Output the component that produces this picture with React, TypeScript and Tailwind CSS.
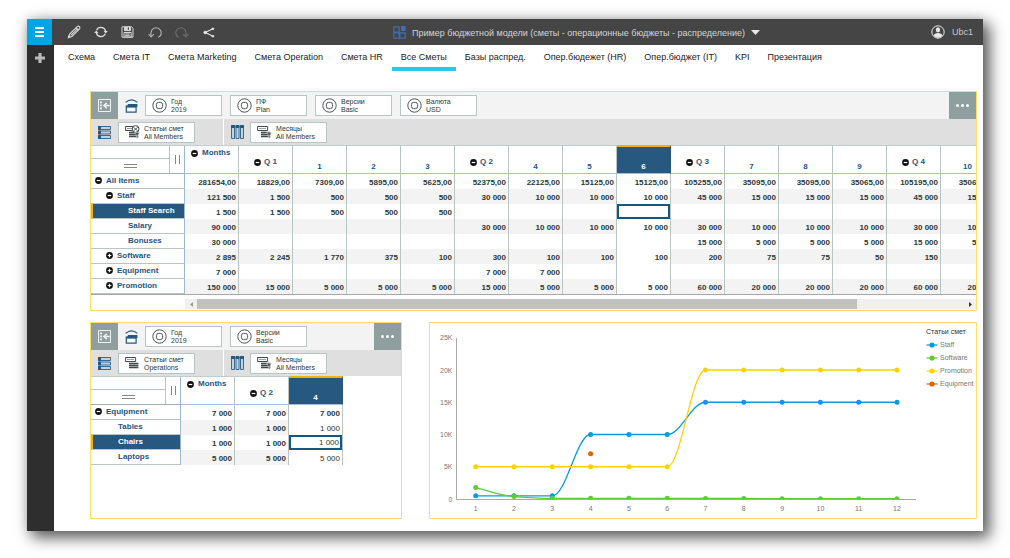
import React from "react";

type IconProps = { className?: string };

const tabs = [
  "Схема", "Смета IT", "Смета Marketing", "Смета Operation", "Смета HR", "Все Сметы",
  "Базы распред.", "Опер.бюдежет (HR)", "Опер.бюджет (IT)", "KPI", "Презентация",
];

function PencilIcon() {
  return (
    <svg width="14" height="14" viewBox="0 0 14 14" fill="none" stroke="#dcdcdc" strokeWidth="1.1">
      <path d="M1.4 12.6 2.6 9 10.2 1.6Q11.5.6 12.4 1.6T12.5 3.8L4.9 11.4Z" />
      <path d="M9 2.6l2.4 2.4M3.8 10.3 10.4 3.8" />
      <path d="m.8 13.2 1-3 1.9 2Z" fill="#dcdcdc" stroke="none" />
    </svg>
  );
}

function RefreshIcon() {
  return (
    <svg width="14" height="14" viewBox="0 0 14 14" fill="none" stroke="#e0e0e0" strokeWidth="1.2">
      <path d="M2.6 5.2A4.8 4.8 0 0 1 11.6 6M11.4 8.8A4.8 4.8 0 0 1 2.4 8" />
      <path d="M9.6 6h4.2l-2.1 2.6ZM.2 8h4.2L2.3 5.4Z" fill="#e0e0e0" stroke="none" />
    </svg>
  );
}

function SaveIcon() {
  return (
    <svg width="13" height="12" viewBox="0 0 13 12" fill="none" stroke="#d8d8d8" strokeWidth="1">
      <path d="M1 .8h9.6L12 2.2v9H1Z" />
      <path d="M3.5 1h6v3.6h-6Z" fill="#d8d8d8" />
      <path d="M7.4 1.6v2.2" stroke="#454545" strokeWidth="1.2" />
      <path d="M3 6.5h7.2v4.6H3ZM4.2 8h4.6M4.2 9.6h4.6" />
    </svg>
  );
}

function UndoIcon({ className }: IconProps) {
  return (
    <svg className={className} width="14" height="13" viewBox="0 0 14 13" fill="none" stroke="currentColor" strokeWidth="1.1">
      <path d="M3 10.6C2.2 5 4.5 1.7 7.8 1.7S13.3 4.2 13.2 7 11.8 10.8 10.4 11.2" />
      <path d="M.6 8.2 3.1 11 5.8 8.2" />
    </svg>
  );
}

function ShareIcon() {
  return (
    <svg width="12" height="11" viewBox="0 0 12 11" fill="#e4e4e4" stroke="#e4e4e4">
      <path d="M10 1.8 2.2 5.5 10 9.2" fill="none" strokeWidth="1.1" />
      <circle cx="2.2" cy="5.5" r="1.3" />
      <circle cx="9.9" cy="1.8" r=".9" />
      <circle cx="9.9" cy="9.2" r=".9" />
    </svg>
  );
}

function BoardIcon() {
  return (
    <svg width="13" height="13" viewBox="0 0 13 13" fill="none" stroke="#3a6fb5" strokeWidth="1.2">
      <path d="M.8.8h5.4v5.4H.8ZM.8 6.8h5.4v5.4H.8ZM6.8 6.8h5.4v5.4H6.8Z" />
      <rect x="8" y="0" width="4.6" height="5" fill="#3a6fb5" stroke="none" />
    </svg>
  );
}

function UserIcon() {
  return (
    <svg width="14" height="14" viewBox="0 0 14 14">
      <circle cx="7" cy="7" r="6.2" fill="none" stroke="#e8e8e8" />
      <ellipse cx="7" cy="4.8" rx="2.2" ry="2.6" fill="#e8e8e8" />
      <path d="M2.5 10.6Q3.4 7.9 7 7.9t4.5 2.7Q9.8 12.8 7 12.8T2.5 10.6Z" fill="#e8e8e8" />
    </svg>
  );
}

function CollapseIcon() {
  return (
    <svg width="13" height="13" viewBox="0 0 13 13" fill="none" stroke="#eef2f2">
      <path d="M.5.5h12v12H.5Z" strokeWidth="1" />
      <path d="M2 3.4h2M2 6.4h2M2 9.4h2" strokeWidth="1.8" />
      <path d="M5.6 6.5h6" strokeWidth="1.6" />
      <path d="M8.8 3.9 6 6.5l2.8 2.6" strokeWidth="1.5" />
    </svg>
  );
}

function ContextIcon() {
  return (
    <svg width="13" height="14" viewBox="0 0 13 14" fill="none" stroke="#24587f">
      <path d="M.6 3.4Q6.5-1.6 12.4 3.4" strokeWidth="1.2" />
      <path d="M2.8 5h9.6v3H2.8Z" fill="#24587f" stroke="none" />
      <path d="M1.3 7h9.8v6.2H1.3Z" strokeWidth="1.2" fill="#f7f7f7" />
      <path d="M1.3 7.6h9.8" strokeWidth="2" />
    </svg>
  );
}

function RowsIcon() {
  return (
    <svg width="13" height="13" viewBox="0 0 13 13" fill="#c3d2df" stroke="#3a6a90" strokeWidth="1">
      <path d="M.5.5h12v3H.5ZM.5 5h12v3H.5ZM.5 9.5h12v3H.5Z" />
      <path d="M.5.5h2v3H.5ZM.5 5h2v3H.5ZM.5 9.5h2v3H.5Z" fill="#24587f" stroke="#24587f" />
    </svg>
  );
}

function ColumnsIcon() {
  return (
    <svg width="13" height="14" viewBox="0 0 13 14" fill="#c3d2df" stroke="#3a6a90" strokeWidth="1">
      <path d="M.5.5h3v13H.5ZM5 .5h3v13H5ZM9.5.5h3v13H9.5Z" />
      <path d="M.5.5h3v2H.5ZM5 .5h3v2H5ZM9.5.5h3v2H9.5Z" fill="#24587f" stroke="#24587f" />
    </svg>
  );
}

function MemberIcon() {
  return (
    <svg width="15" height="15" viewBox="0 0 15 15" fill="none" stroke="#4c5656" strokeWidth="1">
      <circle cx="7.5" cy="7.5" r="6.7" />
      <rect x="4.4" y="4.4" width="6.2" height="6.2" rx="2.2" />
    </svg>
  );
}

type FilterKind = "clock" | "funnel" | "plain";

function FilterIcon({ kind }: { kind: FilterKind }) {
  return (
    <svg width="15" height="14" viewBox="0 0 15 14" fill="none" stroke="#3f4a4a" strokeWidth="1">
      <path d="M.6 1.5h10v4H.6Z" />
      <path d="M2 3.5h7" stroke="#9aa5a5" />
      <path d="M4 7.5h9.4M4 9.5h9.4M4 11.5h9.4" strokeWidth="1.3" />
      {kind === "clock" && (
        <>
          <circle cx="10.6" cy="4" r="3.4" fill="#fff" />
          <path d="M8.4 2.2 12.8 6M12.8 2.2 8.4 6" strokeWidth=".9" />
        </>
      )}
      {kind !== "plain" && <path d="M9.6 7.6h5l-1.8 2.4v3.6l-1.4-1V10Z" fill="#3f4a4a" stroke="#fff" strokeWidth=".5" />}
    </svg>
  );
}

function Toggle({ open }: { open: boolean }) {
  return (
    <button type="button" aria-label={open ? "Collapse" : "Expand"} className="block shrink-0">
      <svg width="7" height="7" viewBox="0 0 7 7">
        <circle cx="3.5" cy="3.5" r="3.4" fill="#111" />
        <path d={open ? "M1.7 3.5h3.6" : "M1.7 3.5h3.6M3.5 1.7v3.6"} stroke="#fff" strokeWidth="1.2" />
      </svg>
    </button>
  );
}

function Chip({ icon, name, value }: { icon: React.ReactNode; name: string; value: string }) {
  return (
    <button type="button" className="flex h-[21px] w-[77px] shrink-0 items-center gap-1 border border-[#b9c4c4] bg-white pl-[5px] text-left text-[7px] leading-[8px] text-[#2c3838]">
      <span className="flex w-4 shrink-0 justify-center">{icon}</span>
      <span className="whitespace-nowrap pt-px">
        <span className="block">{name}</span>
        <span className="block">{value}</span>
      </span>
    </button>
  );
}

type Member = { name: string; value: string };

function PanelBars({ context, rowKind, rowValue }: { context: Member[]; rowKind: FilterKind; rowValue: string }) {
  return (
    <>
      <div className="flex h-[27px] items-center bg-[#f3f3f3]">
        <button type="button" aria-label="Hide panel" className="flex h-full w-[27px] shrink-0 items-center justify-center bg-[#8f9e9e]">
          <CollapseIcon />
        </button>
        <span className="flex w-[27px] shrink-0 justify-center"><ContextIcon /></span>
        <div className="flex gap-2">
          {context.map((m) => (
            <Chip key={m.name} icon={<MemberIcon />} name={m.name} value={m.value} />
          ))}
        </div>
        <button type="button" aria-label="More" className="ml-auto flex h-full w-[27px] shrink-0 items-center justify-center gap-[2px] bg-[#8f9e9e]">
          <span className="size-[3px] rounded-full bg-white" />
          <span className="size-[3px] rounded-full bg-white" />
          <span className="size-[3px] rounded-full bg-white" />
        </button>
      </div>
      <div className="flex h-[26px] bg-[#dfdfdf]">
        <div className="flex w-[133px] shrink-0 items-center border-r border-white">
          <span className="flex w-[27px] justify-center"><RowsIcon /></span>
          <Chip icon={<FilterIcon kind={rowKind} />} name="Статьи смет" value={rowValue} />
        </div>
        <div className="flex items-center">
          <span className="flex w-[26px] justify-center"><ColumnsIcon /></span>
          <Chip icon={<FilterIcon kind="funnel" />} name="Месяцы" value="All Members" />
        </div>
      </div>
    </>
  );
}

type Column = { label: string; kind: "all" | "quarter" | "month"; selected?: boolean };
type Row = { label: string; level: number; toggle?: "open" | "closed"; selected?: boolean; values: string[] };

const month = (label: string, selected = false): Column => ({ label, kind: "month", selected });
const quarter = (label: string): Column => ({ label, kind: "quarter" });
const allMonths: Column = { label: "Months", kind: "all" };

function headerTone(c: Column) {
  return c.selected
    ? "border-t-2 border-t-[#f2b010] border-r-[#265880] bg-[#265880] text-white"
    : "border-t border-t-[#c3cdcd] border-r-[#b9c4c4] bg-white text-[#1f5582]";
}

function HeaderLabel({ column }: { column: Column }) {
  if (column.kind === "all") {
    return <div className="flex h-[27px] items-start gap-1 pl-[6px] pt-[2px]"><span className="pt-[2px]"><Toggle open /></span>{column.label}</div>;
  }
  if (column.kind === "quarter") {
    return <div className="flex h-[27px] items-center justify-center gap-[3px] pt-1"><span className="pt-px"><Toggle open /></span>{column.label}</div>;
  }
  return <div className="flex h-[26px] items-end justify-center pb-px">{column.label}</div>;
}

const indents = ["pl-[4px]", "pl-[15px]", "pl-[37px]", "pl-[27px]"];

function Grid({ columns, rows, caption, compact = false }: { columns: Column[]; rows: Row[]; caption: string; compact?: boolean }) {
  return (
    <div className="overflow-hidden">
      <table className="w-0 table-fixed border-separate border-spacing-0 text-[8px] leading-[10px]" aria-label={caption}>
        <colgroup>
          <col className={compact ? "w-[90px]" : "w-[94px]"} />
          {columns.map((c) => <col key={c.label} className="w-[54px]" />)}
        </colgroup>
        <thead>
          <tr className="h-[29px]">
            <th className="border-b border-r border-t border-b-[#9fb0b8] border-r-[#9db7d0] border-t-[#c3cdcd] p-0">
              <div className="flex h-[27px]">
                <div className="flex flex-1 flex-col">
                  <div className="h-[13px] border-b border-[#b9c4c4]" />
                  <div className="flex flex-1 flex-col items-center justify-center gap-[2px]">
                    <span className="h-px w-[13px] bg-[#808a8a]" />
                    <span className="h-px w-[13px] bg-[#808a8a]" />
                  </div>
                </div>
                <div className="flex w-[15px] items-center justify-center gap-[3px] border-l border-[#b9c4c4]">
                  <span className="h-[9px] w-px bg-[#808a8a]" />
                  <span className="h-[9px] w-px bg-[#808a8a]" />
                </div>
              </div>
            </th>
            {columns.map((c) => (
              <th key={c.label} scope="col" className={`border-b border-r border-b-[#a9bedb] p-0 ${headerTone(c)}`}>
                <HeaderLabel column={c} />
              </th>
            ))}
          </tr>
        </thead>
        <tbody>
          {rows.map((r, i) => (
            <tr key={r.label} className="h-[15px]">
              <th
                scope="row"
                className={`border-b border-r border-b-[#b9c4c4] border-r-[#9db7d0] p-0 text-left ${
                  r.selected ? "bg-[#265880] text-white shadow-[inset_2px_0_0_#f2b010]" : "text-[#1f5582]"
                }`}
              >
                <div className={`flex h-[14px] items-center gap-1 pb-px ${indents[r.level]}`}>
                  {r.toggle && <Toggle open={r.toggle === "open"} />}
                  {r.label}
                </div>
              </th>
              {columns.map((c, j) => {
                const active = r.selected && c.selected;
                const stripe = i % 2 === 1 && !c.selected ? "bg-[#f3f3f3]" : "bg-white";
                const weight = compact && c.selected && i > 0 ? "font-normal" : "font-bold";
                return (
                  <td key={c.label} className={`border-r border-r-[#b9c4c4] p-0 text-right text-[#2c3838] ${stripe} ${weight}`}>
                    {active ? (
                      <input
                        aria-label={`${r.label}, ${c.label}`}
                        defaultValue={r.values[j]}
                        className="block h-[15px] w-full border-2 border-[#0f5a85] bg-white pr-px text-right"
                      />
                    ) : (
                      <div className="h-[15px] overflow-hidden whitespace-nowrap pr-[2px] pt-[4px]">{r.values[j]}</div>
                    )}
                  </td>
                );
              })}
            </tr>
          ))}
        </tbody>
      </table>
    </div>
  );
}

const mainColumns: Column[] = [
  allMonths, quarter("Q 1"), month("1"), month("2"), month("3"),
  quarter("Q 2"), month("4"), month("5"), month("6", true),
  quarter("Q 3"), month("7"), month("8"), month("9"),
  quarter("Q 4"), month("10"),
];

const mainRows: Row[] = [
  { label: "All Items", level: 0, toggle: "open", values: ["281654,00", "18829,00", "7309,00", "5895,00", "5625,00", "52375,00", "22125,00", "15125,00", "15125,00", "105255,00", "35095,00", "35095,00", "35065,00", "105195,00", "35065,00"] },
  { label: "Staff", level: 1, toggle: "open", values: ["121 500", "1 500", "500", "500", "500", "30 000", "10 000", "10 000", "10 000", "45 000", "15 000", "15 000", "15 000", "45 000", "15 000"] },
  { label: "Staff Search", level: 2, selected: true, values: ["1 500", "1 500", "500", "500", "500", "", "", "", "", "", "", "", "", "", ""] },
  { label: "Salary", level: 2, values: ["90 000", "", "", "", "", "30 000", "10 000", "10 000", "10 000", "30 000", "10 000", "10 000", "10 000", "30 000", "10 000"] },
  { label: "Bonuses", level: 2, values: ["30 000", "", "", "", "", "", "", "", "", "15 000", "5 000", "5 000", "5 000", "15 000", "5 000"] },
  { label: "Software", level: 1, toggle: "closed", values: ["2 895", "2 245", "1 770", "375", "100", "300", "100", "100", "100", "200", "75", "75", "50", "150", ""] },
  { label: "Equipment", level: 1, toggle: "closed", values: ["7 000", "", "", "", "", "7 000", "7 000", "", "", "", "", "", "", "", ""] },
  { label: "Promotion", level: 1, toggle: "closed", values: ["150 000", "15 000", "5 000", "5 000", "5 000", "15 000", "5 000", "5 000", "5 000", "60 000", "20 000", "20 000", "20 000", "60 000", "20 000"] },
];

const detailColumns: Column[] = [allMonths, quarter("Q 2"), month("4", true)];

const detailRows: Row[] = [
  { label: "Equipment", level: 0, toggle: "open", values: ["7 000", "7 000", "7 000"] },
  { label: "Tables", level: 3, values: ["1 000", "1 000", "1 000"] },
  { label: "Chairs", level: 3, selected: true, values: ["1 000", "1 000", "1 000"] },
  { label: "Laptops", level: 3, values: ["5 000", "5 000", "5 000"] },
];

const series = [
  { name: "Staff", color: "#0a9bdc", values: [500, 500, 500, 10000, 10000, 10000, 15000, 15000, 15000, 15000, 15000, 15000] },
  { name: "Software", color: "#62cc2e", values: [1770, 375, 100, 100, 100, 100, 75, 75, 50, 50, 50, 50] },
  { name: "Promotion", color: "#fbd400", values: [5000, 5000, 5000, 5000, 5000, 5000, 20000, 20000, 20000, 20000, 20000, 20000] },
];

const chartX = (i: number) => 45.7 + i * 38.3;
const chartY = (v: number) => 176 - v * 0.00645;

function linePath(values: number[]) {
  const slope = values.map((v, i) => {
    if (i === 0 || i === values.length - 1) return 0;
    const a = v - values[i - 1];
    const b = values[i + 1] - v;
    return a * b > 0 ? (2 * a * b) / (a + b) : 0;
  });
  slope[0] = values[1] - values[0];
  return values.reduce((d, v, i) => {
    if (i === 0) return `M${chartX(0)} ${chartY(v)}`;
    const p = values[i - 1];
    return `${d}C${chartX(i - 1) + 14} ${chartY(p + slope[i - 1] * 0.36)} ${chartX(i) - 14} ${chartY(v - slope[i] * 0.36)} ${chartX(i)} ${chartY(v)}`;
  }, "");
}

function Chart() {
  return (
    <svg className="block shrink-0" width="496" height="195" viewBox="0 0 496 195" role="img" aria-label="Статьи смет">
      <defs>
        <clipPath id="plot"><rect x="26" y="0" width="470" height="176.5" /></clipPath>
      </defs>
      <path d="M26.5 15V176.5H486" fill="none" stroke="#aaa" />
      <g fill="#777" fontSize="7">
        {[0, 5, 10, 15, 20, 25].map((k) => (
          <text key={k} x="22.5" y={chartY(k * 1000) + 2.6} textAnchor="end">{k ? `${k}K` : "0"}</text>
        ))}
        {series[0].values.map((_, i) => (
          <text key={i} x={chartX(i)} y="188" textAnchor="middle">{i + 1}</text>
        ))}
      </g>
      <g clipPath="url(#plot)">
        {series.map((s) => (
          <g key={s.name} fill={s.color}>
            <path d={linePath(s.values)} fill="none" stroke={s.color} strokeWidth="1.3" />
            {s.values.map((v, i) => <circle key={i} cx={chartX(i)} cy={chartY(v)} r="2.5" />)}
          </g>
        ))}
        <circle cx={chartX(3)} cy={chartY(7000)} r="2.5" fill="#e06400" />
      </g>
    </svg>
  );
}

function Legend() {
  const items = [...series.map(({ name, color }) => ({ name, color })), { name: "Equipment", color: "#e06400" }];
  return (
    <div className="pt-1 text-[7px] leading-[10px] text-[#777]">
      <div className="whitespace-nowrap text-[#333]">Статьи смет</div>
      <ul className="flex flex-col gap-[3px] pt-[3px]">
        {items.map((s) => (
          <li key={s.name} className="flex items-center gap-[2px]">
            <svg width="12" height="6" viewBox="0 0 12 6" fill={s.color} stroke={s.color}>
              <path d="M.5 3h11" strokeWidth="1.2" />
              <circle cx="6" cy="3" r="2.6" stroke="none" />
            </svg>
            {s.name}
          </li>
        ))}
      </ul>
    </div>
  );
}

export default function App() {
  return (
    <div className="flex min-h-screen bg-white px-[27px] pb-[27px] pt-[19px] font-['Liberation_Sans',Arial,sans-serif]">
      <div className="flex min-w-0 flex-1 flex-col bg-white shadow-[6px_6px_14px_1px_rgba(0,0,0,0.6),0_0_12px_rgba(0,0,0,0.18)]">
        <header className="flex h-[26px] shrink-0 items-center bg-[#454545] pr-[10px]">
          <button type="button" aria-label="Menu" className="flex h-full w-[25px] shrink-0 flex-col items-center justify-center gap-[2px] bg-[#00a5e3]">
            <span className="h-[2px] w-[9px] bg-white" />
            <span className="h-[2px] w-[9px] bg-white" />
            <span className="h-[2px] w-[9px] bg-white" />
          </button>
          <div className="flex items-center pl-2 text-[#b5b5b5]">
            <button type="button" aria-label="Edit" className="flex w-[27px] justify-center"><PencilIcon /></button>
            <button type="button" aria-label="Refresh" className="flex w-[27px] justify-center"><RefreshIcon /></button>
            <button type="button" aria-label="Save" className="flex w-[27px] justify-center"><SaveIcon /></button>
            <button type="button" aria-label="Undo" className="flex w-[27px] justify-center"><UndoIcon /></button>
            <button type="button" aria-label="Redo" className="flex w-[27px] justify-center"><UndoIcon className="-scale-x-100 text-[#6e6e6e]" /></button>
            <button type="button" aria-label="Share" className="flex w-[27px] justify-center"><ShareIcon /></button>
          </div>
          <button type="button" className="mx-auto flex items-center gap-[6px] whitespace-nowrap text-[9px] text-[#d5d5d5]">
            <BoardIcon />
            <span className="pt-[3px]">Пример бюджетной модели (сметы - операционные бюджеты - распределение)</span>
            <svg width="9" height="5" viewBox="0 0 9 5"><path d="M0 0h9L4.5 5Z" fill="#e8e8e8" /></svg>
          </button>
          <button type="button" className="flex items-center gap-[7px] text-[9px] text-[#c8c8c8]">
            <UserIcon />
            <span className="pt-px">Ubc1</span>
          </button>
        </header>
        <div className="flex min-h-0 flex-1">
          <aside className="flex w-[27px] shrink-0 flex-col bg-[#2e2e2e] pt-2">
            <button type="button" aria-label="Add" className="flex w-[25px] justify-center">
              <svg width="10" height="10" viewBox="0 0 10 10"><path d="M3.4 0h3.2v3.4H10v3.2H6.6V10H3.4V6.6H0V3.4h3.4Z" fill="#b8b8b8" /></svg>
            </button>
          </aside>
          <main className="min-w-0 flex-1 pb-3">
            <nav className="flex h-[26px] pl-[5px] text-[9px] leading-[10px] text-[#222]">
              {tabs.map((t) => (
                <a
                  key={t}
                  href="#"
                  aria-current={t === "Все Сметы" ? "page" : undefined}
                  className={`whitespace-nowrap border-b-4 px-[9px] pt-[7px] ${t === "Все Сметы" ? "border-[#25cbe4]" : "border-transparent"}`}
                >
                  {t}
                </a>
              ))}
            </nav>
            <div className="flex flex-col gap-[11px] pl-9 pr-[6px] pt-5">
              <section className="border border-[#fbe067]">
                <PanelBars
                  context={[
                    { name: "Год", value: "2019" },
                    { name: "ПФ", value: "Plan" },
                    { name: "Версии", value: "Basic" },
                    { name: "Валюта", value: "USD" },
                  ]}
                  rowKind="clock"
                  rowValue="All Members"
                />
                <Grid columns={mainColumns} rows={mainRows} caption="Все Сметы" />
                <div className="border-t border-[#a8a8a8] pb-px pl-[94px] pt-1">
                  <div className="flex h-[10px] items-center bg-[#f0f0f0]">
                    <button type="button" aria-label="Scroll left" className="flex w-3 justify-center">
                      <svg width="3" height="5" viewBox="0 0 3 5"><path d="M3 0v5L0 2.5Z" fill="#999" /></svg>
                    </button>
                    <div className="flex h-full flex-1"><div className="h-full w-[86%] bg-[#c1c1c1]" /></div>
                    <button type="button" aria-label="Scroll right" className="flex w-3 justify-center">
                      <svg width="3" height="5" viewBox="0 0 3 5"><path d="M0 0v5l3-2.5Z" fill="#333" /></svg>
                    </button>
                  </div>
                </div>
              </section>
              <div className="flex gap-[27px]">
                <section className="w-[312px] shrink-0 border border-[#fbe067]">
                  <PanelBars
                    context={[
                      { name: "Год", value: "2019" },
                      { name: "Версии", value: "Basic" },
                    ]}
                    rowKind="plain"
                    rowValue="Operations"
                  />
                  <Grid columns={detailColumns} rows={detailRows} caption="Equipment" compact />
                </section>
                <section className="flex min-w-0 flex-1 border border-[#fbe067]">
                  <Chart />
                  <Legend />
                </section>
              </div>
            </div>
          </main>
        </div>
      </div>
    </div>
  );
}
